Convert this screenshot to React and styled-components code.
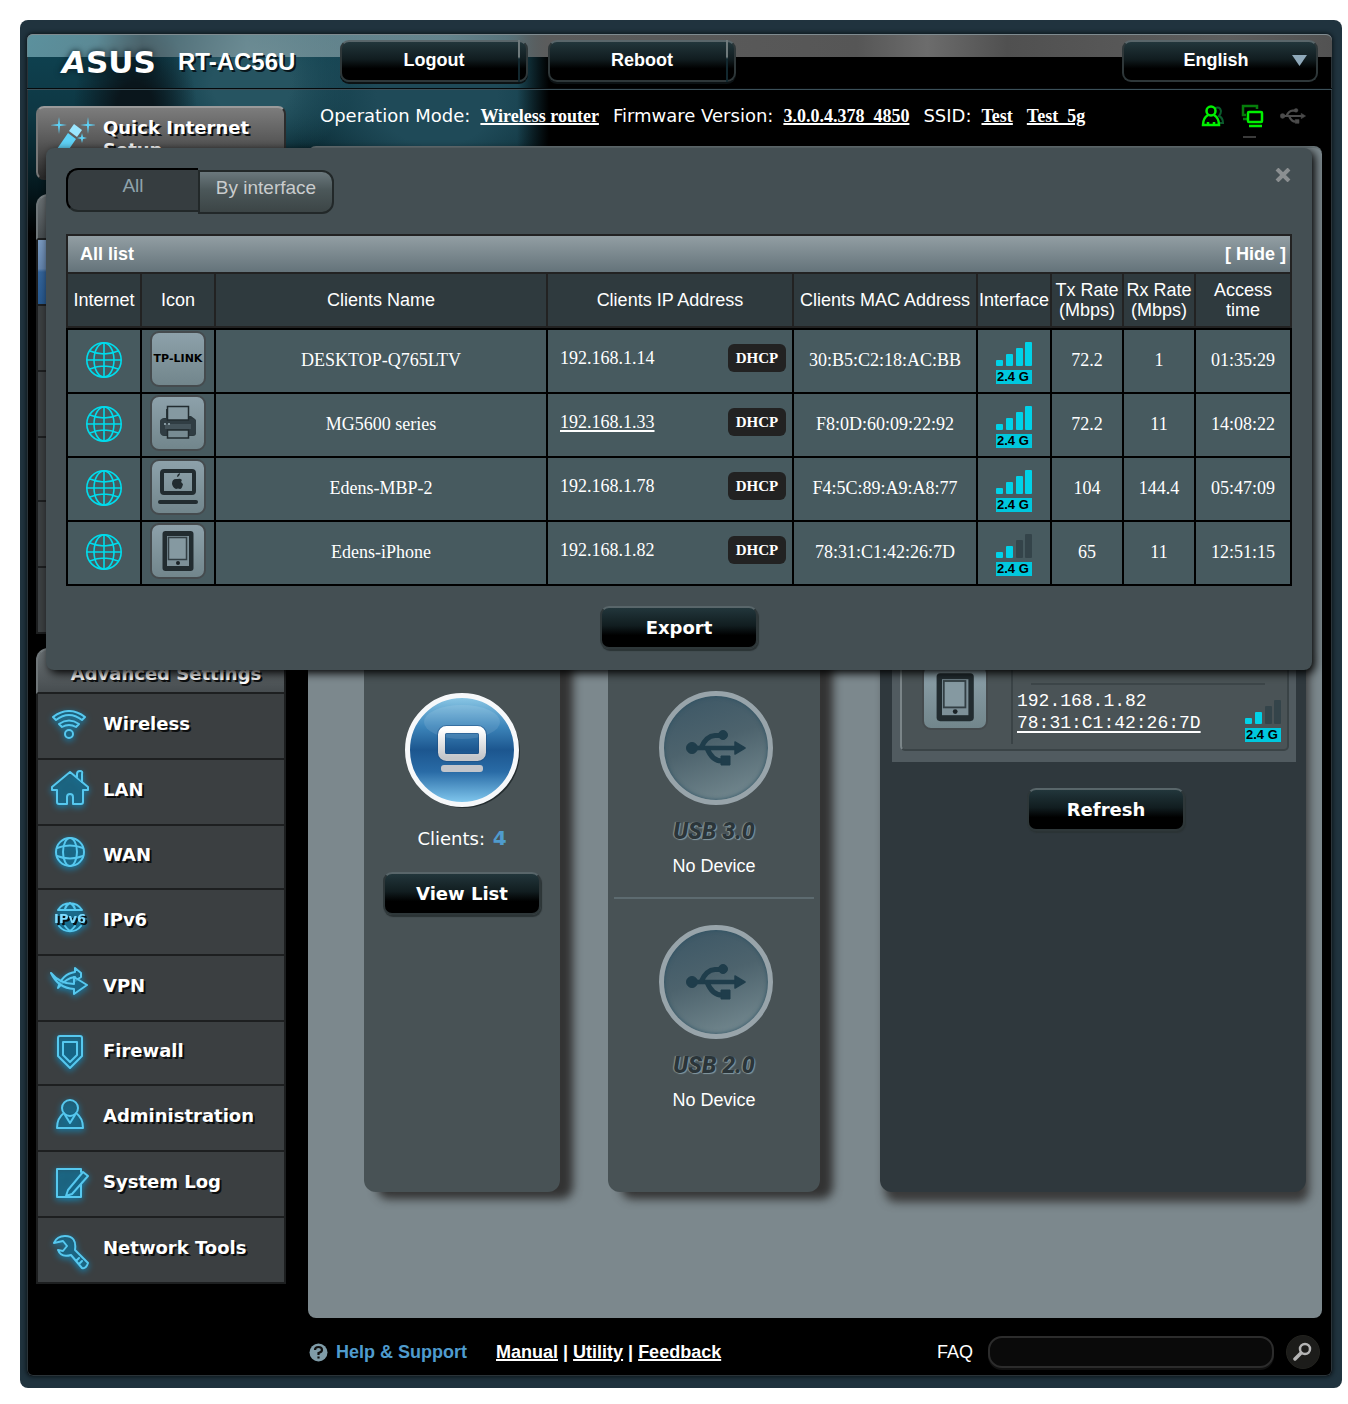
import React from "react";
import styled, { createGlobalStyle, css } from "styled-components";

const SANS = '"Liberation Sans", Arial, sans-serif';
const SERIF = '"Liberation Serif", "Times New Roman", serif';
const WIDE = '"DejaVu Sans", Verdana, sans-serif';
const MONO = '"Liberation Mono", "Courier New", monospace';

const GlobalStyle = createGlobalStyle`
  *, *::before, *::after { box-sizing: border-box; }
  body { margin: 0; background: #fff; color: #fff; font-family: ${SANS}; font-size: 18px; }
  button, input, select { font: inherit; color: inherit; margin: 0; }
  a { color: inherit; }
  svg { display: block; flex: none; }
`;

/* ---------- frame ---------- */

const Page = styled.div`
  padding: 20px 6px 16px 20px;
`;

const Frame = styled.div`
  padding: 14px 10px 12px 7px;
  border-radius: 8px;
  background: #20333e;
`;

const Screen = styled.div`
  position: relative;
  border-radius: 6px;
  background:
    radial-gradient(ellipse 62px 90px at 108px 76px, #0a161c 30%, transparent 100%),
    linear-gradient(90deg, transparent 490px, #000 522px),
    radial-gradient(ellipse 150px 130px at 410px 60px, #1f4a58 40%, transparent 100%),
    radial-gradient(ellipse 100px 80px at 225px 50px, #265461 40%, transparent 100%),
    linear-gradient(180deg, #0e4453 0, #0e3743 80px, #051a20 150px, #000 200px);
  background-color: #000;
  box-shadow: 0 0 4px 1px #0c151a, inset 0 0 0 1px #2a3338;
`;

/* ---------- header ---------- */

const Header = styled.header`
  display: flex;
  align-items: center;
  height: 56px;
  padding: 0 14px 2px 35px;
  border-radius: 6px 6px 0 0;
  border-bottom: 1px solid #3c5059;
  background:
    linear-gradient(90deg, #8fc4cf99 0, #8fb8c299 70px, #6f7f85a0 115px, #9ab0b599 220px, #9ab0b590 420px, #7f8e92a0 480px, #5c5c5c 524px, #565656 830px, #6c6c6c 900px, #505050 980px, #5e5e5e 1200px, #525252 100%) 0 0 / 100% 23px no-repeat;
  box-shadow: inset 0 1px 0 #7f8b90, inset 0 -1px 0 #05090b;
`;

const Brand = styled.div`
  display: flex;
  align-items: center;
  gap: 20px;
  width: 278px;
  padding-top: 3px;
`;

const Logo = styled.span`
  width: 96px;
  font: bold 31px/28px ${WIDE};
  text-shadow: 0 0 6px #0a1a20;
`;

const LogoSlant = styled.span`
  font-style: oblique;
`;

const Product = styled.h1`
  margin: 0;
  font: bold 24px/28px ${SANS};
  text-shadow: 2px 2px 0 #08161c;
  white-space: nowrap;
`;

const glossy = css`
  border: 2px solid #2e3739;
  border-top-color: #59666a;
  border-radius: 9px;
  background: linear-gradient(180deg, #22363b 0, #111d20 45%, #000 70%);
  color: #fff;
`;

const HeaderActions = styled.div`
  display: flex;
  gap: 20px;
  margin-right: auto;
`;

const HeaderButton = styled.button`
  ${glossy}
  position: relative;
  width: 188px;
  height: 42px;
  padding: 0;
  font-weight: bold;
  box-shadow: 0 2px 0 #0c1214;
  &::after {
    content: "";
    position: absolute;
    top: -2px;
    bottom: -2px;
    right: 6px;
    width: 2px;
    background: linear-gradient(180deg, #6f7a7c 40%, #12282f 45%);
  }
`;

const LanguageBox = styled.div`
  display: grid;
  align-items: center;
  & > * { grid-area: 1 / 1; }
  & > svg { justify-self: end; margin-right: 11px; pointer-events: none; }
`;

const Language = styled.select`
  ${glossy}
  appearance: none;
  width: 196px;
  height: 42px;
  padding: 0 8px 2px 0;
  font-weight: bold;
  text-align: center;
  text-align-last: center;
`;

/* ---------- body ---------- */

const Body = styled.div`
  display: flex;
  gap: 22px;
  padding: 0 10px 0 9px;
`;

const Sidebar = styled.nav`
  display: flex;
  flex-direction: column;
  flex: none;
  gap: 14px;
  width: 250px;
  padding-top: 16px;
`;

const menuText = css`
  font: bold 18px/22px ${WIDE};
  color: #fff;
  text-shadow: 2px 2px 0 #0c0e0f;
  text-decoration: none;
`;

const QuickSetup = styled.a`
  ${menuText}
  display: flex;
  gap: 8px;
  height: 74px;
  padding: 9px 20px 0 13px;
  border: 2px solid #2c2c2c;
  border-top-color: #9a9a9a;
  border-left-color: #777;
  border-radius: 8px;
  background: linear-gradient(180deg, #7c7c7c 0, #5a5a5a 45%, #2b2b2b 100%);
`;

const MenuTitle = styled.h2`
  ${menuText}
  height: 46px;
  margin: 0;
  padding: 13px 0 0 10px;
  border: 2px solid #1d1f20;
  border-top-color: #7b8386;
  border-left-color: #6f7679;
  border-radius: 12px 12px 0 0;
  background: linear-gradient(180deg, #6a7174 0, #474d50 100%);
  text-align: center;
`;

const Menu = styled.ul`
  margin: 0;
  padding: 0;
  list-style: none;
`;

const MenuItem = styled.li`
  height: ${(p) => (p.$short ? 64 : 66)}px;
  border: 2px solid #1d1f20;
  border-top: 0;
  background: ${(p) =>
    p.$active ? "linear-gradient(180deg, #7a9ac0 0, #6485ae 45%, #34649a 50%, #27598f 100%)" : "#3b3f41"};
`;

const MenuLink = styled.a`
  ${menuText}
  display: flex;
  align-items: center;
  gap: 13px;
  height: 100%;
  padding: 0 0 4px 12px;
`;

const Glow = styled.svg`
  fill: #17607c88;
  stroke: #56c8ef;
  stroke-width: 2;
  stroke-linejoin: round;
  stroke-linecap: round;
  filter: drop-shadow(0 2px 3px #0f8cc0);
  overflow: visible;
`;

const Content = styled.div`
  flex: 1;
  min-width: 0;
`;

const StatusBar = styled.div`
  display: flex;
  align-items: center;
  gap: 14px;
  height: 56px;
  padding: 0 16px 4px 12px;
  white-space: nowrap;
`;

const Status = styled.span`
  display: flex;
  gap: 10px;
  font: 18px/24px ${WIDE};
`;

const StatusLink = styled.a`
  margin-right: ${(p) => (p.$spaced ? 4 : 0)}px;
  font: bold 18px/24px ${SERIF};
  text-decoration-thickness: 2px;
`;

const StatusIcons = styled.div`
  display: flex;
  align-items: center;
  gap: 16px;
  margin-left: auto;
`;

const Main = styled.main`
  display: grid;
  grid-template-columns: 196px 212px minmax(300px, 1fr);
  gap: 48px;
  padding: 494px 16px 126px 56px;
  border-radius: 8px;
  border-top: 2px solid #6b777b;
  background: #7c888d;
`;

const Column = styled.section`
  display: flex;
  flex-direction: column;
  align-items: center;
  min-height: 550px;
  padding-top: 49px;
  border-radius: 12px;
  background: #485255;
  box-shadow: 13px 7px 10px #333;
`;

const SideColumn = styled(Column)`
  margin-left: 12px;
  padding: 0 10px 0 12px;
  background: #2f383d;
  box-shadow: 4px 11px 10px -1px #3a3a3a;
`;

const ClientCount = styled.p`
  margin: 16px 0 20px;
  font: 18px/26px ${WIDE};
`;

const Count = styled.strong`
  margin-left: 2px;
  color: #4f9bcd;
  font-size: 20px;
`;

const GlossButton = styled.button`
  ${glossy}
  width: 158px;
  height: 43px;
  padding: 0;
  font: bold 18px/24px ${WIDE};
  box-shadow: 1px 2px 1px #2b3335;
`;

const UsbPort = styled.div`
  display: flex;
  flex-direction: column;
  align-items: center;
  width: 200px;
  height: ${(p) => (p.$last ? 240 : 208)}px;
  margin-bottom: 26px;
  border-bottom: ${(p) => (p.$last ? "0" : "2px solid #5d6b70")};
`;

const UsbName = styled.strong`
  margin: 13px 0 8px;
  color: #2b3539;
  font: italic 900 23px/28px Roboto, "Liberation Sans", sans-serif;
  text-shadow: 1px 1px 1px #8499a1, -1px 0 1px #8499a1;
`;

const Note = styled.span`
  font: 18px/24px ${SANS};
`;

const ClientCard = styled.div`
  width: 100%;
  padding: 0 7px 11px 8px;
  background: #515b60;
`;

const ClientInner = styled.div`
  display: flex;
  align-items: flex-start;
  height: 109px;
  padding: 20px 6px 0 20px;
  border: 2px solid #3a4346;
  border-left-color: #7b8588;
  border-radius: 5px;
  background: #4a5356;
`;

const ClientText = styled.div`
  display: flex;
  flex-direction: column;
  flex: 1;
  height: 80px;
  margin-left: 23px;
  padding-left: 4px;
  border-left: 2px solid #3a4346;
  font: 18px/22px ${MONO};
  & > hr { margin: 19px -20px 5px 14px; border: 0; border-top: 2px solid #3c4548; }
  & > a { text-decoration-thickness: 2px; text-underline-offset: 3px; }
`;

const CardSignal = styled.div`
  padding-top: 30px;
`;

const RefreshWrap = styled.div`
  padding: 26px 0 0 24px;
`;

/* ---------- footer ---------- */

const Footer = styled.footer`
  display: flex;
  align-items: center;
  height: 58px;
  padding: 10px 2px 0 1px;
  font-weight: bold;
`;

const Help = styled.span`
  display: flex;
  align-items: center;
  gap: 8px;
  margin-right: 29px;
  color: #4f9bcd;
`;

const FootLinks = styled.span`
  margin-right: auto;
  & > a { text-decoration-thickness: 2px; }
`;

const Faq = styled.form`
  display: flex;
  align-items: center;
  font-weight: normal;
  & > input {
    width: 286px;
    height: 32px;
    margin: 0 12px 0 15px;
    padding: 0 14px;
    border: 2px solid #2c2c2c;
    border-radius: 14px;
    background: #0a0a0a;
    box-shadow: 0 2px 0 #111;
  }
`;

const Search = styled.button`
  display: grid;
  place-items: center;
  width: 34px;
  height: 34px;
  padding: 0;
  border: 1px solid #22221e;
  border-radius: 50%;
  background: #1c1c1a;
`;

/* ---------- client list dialog ---------- */

const Dialog = styled.section`
  position: absolute;
  top: 114px;
  left: 19px;
  right: 20px;
  padding: 20px 20px 21px;
  border-radius: 8px;
  background: #444f53;
  box-shadow: 3px 3px 10px #000;
`;

const DialogTop = styled.div`
  display: flex;
  height: 66px;
`;

const Tab = styled.button`
  width: ${(p) => (p.$selected ? 132 : 136)}px;
  height: 44px;
  margin-top: ${(p) => (p.$selected ? 0 : 2)}px;
  padding: 0 0 8px;
  border: 2px solid #222829;
  border-radius: ${(p) => (p.$selected ? "12px 0 0 12px" : "0 12px 12px 0")};
  background: ${(p) => (p.$selected ? "#363d40" : "linear-gradient(180deg, #6b787d 0, #4b5759 45%, #3c4546 100%)")};
  color: ${(p) => (p.$selected ? "#8fa3ac" : "#c9cccd")};
  font: 19px/22px ${SANS};
  ${(p) => p.$selected && "border-top-color: #000; border-left-color: #000; border-right: 0;"}
`;

const Close = styled.button`
  align-self: flex-start;
  margin-left: auto;
  padding: 0;
  border: 0;
  background: none;
`;

const ListTitle = styled.div`
  display: flex;
  justify-content: space-between;
  align-items: center;
  height: 38px;
  padding: 0 4px 0 12px;
  border: 2px solid #222;
  border-bottom: 0;
  background: linear-gradient(180deg, #929ea3 0, #64737a 100%);
  font-weight: bold;
  & > button { padding: 0; border: 0; background: none; }
`;

const Table = styled.table`
  width: 100%;
  table-layout: fixed;
  border-collapse: collapse;
`;

const Col = styled.col`
  width: ${(p) => (p.$w ? `${p.$w}px` : "auto")};
`;

const Th = styled.th`
  height: 56px;
  padding: 0 0 2px;
  border: 2px solid #222;
  border-bottom-color: #000;
  background: #2f3a3e;
  box-shadow: inset 0 -2px 0 #222;
  font: 18px/20px ${SANS};
`;

const Td = styled.td`
  height: 64px;
  padding: 0 0 2px;
  border: 2px solid #000;
  background: #475a5f;
  font: 18px/22px ${SERIF};
  text-align: center;
`;

const Center = styled.div`
  display: grid;
  justify-content: center;
`;

const IpCell = styled.div`
  display: flex;
  justify-content: space-between;
  align-items: center;
  padding: 0 6px 4px 12px;
  & > a { text-decoration-thickness: 2px; text-underline-offset: 2px; }
`;

const Badge = styled.span`
  width: 58px;
  border-radius: 6px;
  background: #222;
  font: bold 15px/28px ${SERIF};
`;

const ExportRow = styled.div`
  display: flex;
  justify-content: center;
  margin-top: 20px;
`;

const Tile = styled.div`
  display: grid;
  flex: none;
  place-items: center;
  width: ${(p) => p.$size}px;
  height: ${(p) => p.$size}px;
  margin-bottom: 2px;
  border: 2px solid #454b4e;
  border-radius: 9px;
  background: linear-gradient(180deg, #8da1aa 0, #72868c 100%);
  color: #000;
  font: bold 11px/14px ${WIDE};
  overflow: hidden;
  white-space: nowrap;
`;

const SignalBox = styled.div`
  width: 36px;
  padding-top: 6px;
`;

const Band = styled.div`
  height: 14px;
  margin-top: 4px;
  padding-left: 1px;
  background: #00c8de;
  color: #000;
  font: bold 13px/14px ${SANS};
  white-space: nowrap;
  text-align: left;
`;

/* ---------- drawings ---------- */

function Signal({ level }) {
  const bars = [6, 12, 18, 24];
  return (
    <SignalBox>
      <svg width="36" height="24" viewBox="0 0 36 24" aria-hidden="true">
        {bars.map((h, i) => (
          <rect key={h} x={i * 10 - (i === 3 ? 1 : 0)} y={24 - h} width="7" height={h} rx="1" fill={i < level ? "#00d2e8" : "#34444a"} />
        ))}
      </svg>
      <Band>2.4 G</Band>
    </SignalBox>
  );
}

function NetGlobe() {
  return (
    <svg width="38" height="38" viewBox="0 0 38 38" fill="none" stroke="#00dcec" strokeWidth="1.6" aria-hidden="true">
      <circle cx="19" cy="19" r="17.200" />
      <ellipse cx="19" cy="19" rx="10" ry="17" />
      <path d="M19 2v34M2 19h34M5 10q14 6 28 0M5 28q14-6 28 0" />
    </svg>
  );
}

function DeviceIcon({ kind, scale = 1 }) {
  const s = 42 * scale;
  if (kind === "printer")
    return (
      <svg width={s} height={s} viewBox="0 0 42 42" aria-hidden="true">
        <path d="M11 5h21v9h2l4 3q1 1 1 3v11q0 3-3 3H7q-3 0-3-3V19q0-3 3-3h2V7h2z" fill="#2b383d" />
        <path d="M3 19q0-2 3-2h30q3 0 3 2v11q0 3-3 3H6q-3 0-3-3z" fill="#303d43" />
        <path d="M8 22h26v5H8z" fill="#44535a" />
        <path d="M10.500 4.500h21V18h-21z" fill="#8599a1" stroke="#222c30" strokeWidth="1.500" />
        <path d="M10.500 28h21v8h-21z" fill="#788c93" stroke="#222c30" strokeWidth="1.500" />
        <path d="M7 21h2v2H7zM11 21h2v2h-2z" fill="#84979f" />
      </svg>
    );
  if (kind === "mac")
    return (
      <svg width={s} height={s} viewBox="0 0 42 42" aria-hidden="true">
        <rect x="5" y="5" width="32" height="22" rx="2" fill="none" stroke="#222c30" strokeWidth="4" />
        <rect x="1" y="34" width="40" height="4" rx="2" fill="#222c30" />
        <path d="M21 13q2-1 4 1-2 2 1 4-1 5-3 5-2-1-4 0-3-1-4-5 0-5 4-5zM20 11q0-3 3-4 0 3-3 4z" fill="#222c30" />
      </svg>
    );
  return (
    <svg width={s} height={s} viewBox="0 0 42 42" aria-hidden="true">
      <rect x="5.500" y="1" width="31" height="40" rx="3" fill="#222c30" />
      <rect x="10" y="6" width="22" height="30" fill="#7d9098" />
      <rect x="11.500" y="7.500" width="18" height="22" fill="#8599a1" stroke="#333f44" strokeWidth="1.500" />
      <circle cx="21" cy="33" r="2" fill="#1a2226" />
    </svg>
  );
}

function UsbTrident({ color, width, height }) {
  return (
    <svg width={width} height={height} viewBox="0 0 60 38" fill={color} stroke={color} aria-hidden="true">
      <circle cx="6" cy="19" r="5.500" />
      <path d="M6 19h44" fill="none" strokeWidth="4.500" />
      <path d="M15 19Q20 7 29 6.500h8M21 19q5 13 15 13" fill="none" strokeWidth="5" />
      <circle cx="37" cy="6" r="4.500" />
      <path d="M35 27h9v9h-9z" strokeWidth="1" strokeLinejoin="round" />
      <path d="M49 13l10 6-10 6z" strokeWidth="1.500" strokeLinejoin="round" />
    </svg>
  );
}

const Disc = styled.div`
  display: grid;
  place-items: center;
  width: 114px;
  height: 114px;
  margin-left: 4px;
  border: 5px solid #98a4aa;
  border-radius: 50%;
  background: linear-gradient(160deg, #3f5967 10%, #4d636d 45%, #71868d 90%);
  box-shadow: inset 0 0 4px #2c5163;
`;

function ClientsOrb() {
  return (
    <svg width="118" height="118" viewBox="0 0 118 118" aria-hidden="true">
      <defs>
        <linearGradient id="orb" x1="0" y1="0" x2="0" y2="1">
          <stop offset="0" stopColor="#8fcbe8" />
          <stop offset="0.280" stopColor="#3d86bb" />
          <stop offset="0.500" stopColor="#1c568f" />
          <stop offset="0.700" stopColor="#296ba6" />
          <stop offset="1" stopColor="#86cdf2" />
        </linearGradient>
        <linearGradient id="pc" x1="0" y1="0" x2="0" y2="1">
          <stop offset="0" stopColor="#fff" />
          <stop offset="1" stopColor="#c4c6ca" />
        </linearGradient>
      </defs>
      <circle cx="61" cy="61" r="56" fill="#242d30" />
      <circle cx="59" cy="59" r="54.500" fill="url(#orb)" stroke="#f6f8fa" strokeWidth="5" />
      <ellipse cx="59" cy="31" rx="38" ry="17" fill="#fff" opacity="0.100" />
      <rect x="38.500" y="38.500" width="41" height="28" rx="5" fill="none" stroke="#1b4c80" strokeWidth="9" opacity="0.500" />
      <rect x="38.500" y="38.500" width="41" height="28" rx="5" fill="none" stroke="url(#pc)" strokeWidth="7" />
      <rect x="38" y="74" width="42" height="7" rx="3" fill="#c2c5cb" />
    </svg>
  );
}

const glyphs = {
  wireless: (
    <>
      <path d="M3 13Q19 1 35 13L32 16Q19 6 6 16z" />
      <path d="M9 20q10-7 20 0l-3 3q-7-4-14 0z" />
      <circle cx="19" cy="30" r="4" />
    </>
  ),
  lan: (
    <>
      <path d="M20 2L2 17v3h5v12q0 2 2 2h8v-7q0-3 3-3t3 3v7h8q2 0 2-2V20h5v-3z" />
      <path d="M27 7V4q0-3 3-3t2 3v8" />
    </>
  ),
  wan: (
    <>
      <circle cx="20" cy="17" r="14" />
      <ellipse cx="20" cy="17" rx="7" ry="14" fill="none" />
      <path d="M7 13q13-5 26 0M7 21q13 5 26 0" fill="none" />
    </>
  ),
  ipv6: (
    <>
      <circle cx="20" cy="17" r="14" stroke="none" />
      <path d="M8 10a14 14 0 0 1 24 0zM15 9q1-4 5-6 4 2 5 6M9 26a14 14 0 0 0 22 0M15 26q2 3 5 5 3-2 5-5" fill="none" />
      <text x="20" y="23" textAnchor="middle" fontFamily="DejaVu Sans" fontWeight="bold" fontSize="13" fill="#7fdcff" stroke="none">IPv6</text>
    </>
  ),
  vpn: (
    <>
      <path d="M8 22Q12 8 25 6V2l6 5v4l-6 4v-4q-9 1-17 11z" />
      <path d="M1 7q9 11 23 11v-7l13 8-13 9v-5Q8 22 1 7z" />
    </>
  ),
  firewall: (
    <>
      <path d="M10 5h20q2 0 2 2v18L20 37 8 25V7q0-2 2-2z" />
      <path d="M13 11h14v13l-7 7-7-7z" />
    </>
  ),
  admin: (
    <>
      <path d="M14 17q-7 5-7 15h26q0-10-7-15M15 19l5 8 5-8" />
      <circle cx="20" cy="12" r="8" />
    </>
  ),
  log: (
    <>
      <path d="M31 22v13H7V7h24v3" />
      <path d="M33 10l5 4-16 18-6 2 2-6z" />
    </>
  ),
  tools: (
    <path d="M4 15l9-2 4 5-4 5-5-1q3 8 13 5l11 13q4 1 6-5L25 22q2-14-10-14-8 0-11 7zM26 33l3-3M29 36l3-3" />
  ),
};

function Wand() {
  return (
    <svg width="44" height="60" viewBox="0 0 44 60" fill="#5fd2f7" aria-hidden="true">
      <path d="M8 0l1 7 7 1-7 1-1 8-1-8-8-1 8-1zM37 0l1 7 7 1-7 1-1 8-1-8-7-1 7-1zM31 16l1 4 4 1-4 1-1 4-1-4-4-1 4-1z" />
      <path d="M23 7l8 6-5 7-8-6z" fill="#9be6ff" />
      <path d="M17 16l8 6L3 54l-8-6z" />
    </svg>
  );
}

/* ---------- data ---------- */

const advanced = [
  ["Wireless", "wireless"],
  ["LAN", "lan"],
  ["WAN", "wan", true],
  ["IPv6", "ipv6"],
  ["VPN", "vpn"],
  ["Firewall", "firewall", true],
  ["Administration", "admin"],
  ["System Log", "log"],
  ["Network Tools", "tools"],
];

const columns = [
  ["Internet", 74],
  ["Icon", 74],
  ["Clients Name"],
  ["Clients IP Address", 246],
  ["Clients MAC Address", 184],
  ["Interface", 74],
  ["Tx Rate (Mbps)", 72],
  ["Rx Rate (Mbps)", 72],
  ["Access time", 96],
];

const clients = [
  { kind: "brand", name: "DESKTOP-Q765LTV", ip: "192.168.1.14", mac: "30:B5:C2:18:AC:BB", level: 4, tx: "72.2", rx: "1", time: "01:35:29" },
  { kind: "printer", name: "MG5600 series", ip: "192.168.1.33", link: true, mac: "F8:0D:60:09:22:92", level: 4, tx: "72.2", rx: "11", time: "14:08:22" },
  { kind: "mac", name: "Edens-MBP-2", ip: "192.168.1.78", mac: "F4:5C:89:A9:A8:77", level: 4, tx: "104", rx: "144.4", time: "05:47:09" },
  { kind: "phone", name: "Edens-iPhone", ip: "192.168.1.82", mac: "78:31:C1:42:26:7D", level: 2, tx: "65", rx: "11", time: "12:51:15" },
];

/* ---------- parts ---------- */

function ClientList() {
  return (
    <Dialog role="dialog" aria-label="Client list">
      <DialogTop>
        <Tab $selected>All</Tab>
        <Tab>By interface</Tab>
        <Close aria-label="Close">
          <svg width="18" height="14" viewBox="0 0 18 14" stroke="#8b8f91" strokeWidth="4">
            <path d="M3 1l12 12M15 1L3 13" />
          </svg>
        </Close>
      </DialogTop>
      <ListTitle>
        <span>All list</span>
        <button>[ Hide ]</button>
      </ListTitle>
      <Table>
        <colgroup>
          {columns.map(([name, w]) => (
            <Col key={name} $w={w} />
          ))}
        </colgroup>
        <thead>
          <tr>
            {columns.map(([name]) => (
              <Th key={name} scope="col">{name}</Th>
            ))}
          </tr>
        </thead>
        <tbody>
          {clients.map((c) => (
            <tr key={c.mac}>
              <Td><Center><NetGlobe /></Center></Td>
              <Td>
                <Center>
                  <Tile $size={56}>{c.kind === "brand" ? "TP-LINK" : <DeviceIcon kind={c.kind} />}</Tile>
                </Center>
              </Td>
              <Td>{c.name}</Td>
              <Td>
                <IpCell>
                  {c.link ? <a href="#printer">{c.ip}</a> : <span>{c.ip}</span>}
                  <Badge>DHCP</Badge>
                </IpCell>
              </Td>
              <Td>{c.mac}</Td>
              <Td><Center><Signal level={c.level} /></Center></Td>
              <Td>{c.tx}</Td>
              <Td>{c.rx}</Td>
              <Td>{c.time}</Td>
            </tr>
          ))}
        </tbody>
      </Table>
      <ExportRow>
        <GlossButton>Export</GlossButton>
      </ExportRow>
    </Dialog>
  );
}

function Navigation() {
  return (
    <Sidebar>
      <QuickSetup href="#setup">
        <Wand />
        <span>Quick Internet Setup</span>
      </QuickSetup>
      <div aria-hidden="true">
        <MenuTitle as="div" />
        <Menu as="div">
          <MenuItem as="div" $active />
          <MenuItem as="div" />
          <MenuItem as="div" />
          <MenuItem as="div" $short />
          <MenuItem as="div" />
          <MenuItem as="div" />
        </Menu>
      </div>
      <div>
        <MenuTitle>Advanced Settings</MenuTitle>
        <Menu>
          {advanced.map(([label, icon, short]) => (
            <MenuItem key={label} $short={short}>
              <MenuLink href={`#${icon}`}>
                <Glow width="40" height="40" viewBox="0 0 40 40" aria-hidden="true">{glyphs[icon]}</Glow>
                {label}
              </MenuLink>
            </MenuItem>
          ))}
        </Menu>
      </div>
    </Sidebar>
  );
}

function TopStatus() {
  return (
    <StatusBar>
      <Status>Operation Mode: <StatusLink href="#mode">Wireless router</StatusLink></Status>
      <Status>Firmware Version: <StatusLink href="#firmware">3.0.0.4.378_4850</StatusLink></Status>
      <Status>
        SSID: <StatusLink href="#ssid" $spaced>Test</StatusLink>
        <StatusLink href="#ssid5">Test_5g</StatusLink>
      </Status>
      <StatusIcons>
        <svg width="24" height="24" viewBox="0 0 24 24" fill="none" strokeWidth="2" aria-hidden="true">
          <path d="M15 4q5-2 6 3 0 3-2 5 4 2 4 7h-4" stroke="#0b5a2c" />
          <circle cx="11" cy="7" r="4.500" stroke="#00f000" strokeWidth="2.500" />
          <path d="M8 11q-5 3-5 10h16q0-7-5-10M8 20v-2M14 20v-2" stroke="#00f000" strokeWidth="2.500" />
        </svg>
        <svg width="24" height="44" viewBox="0 -8 24 44" fill="none" strokeWidth="2.500" aria-hidden="true">
          <path d="M17 7V4H3v9h3M3 17h4" stroke="#067d0b" />
          <rect x="8" y="10" width="14" height="10" rx="1" stroke="#00f000" />
          <path d="M9 24h13" stroke="#00f000" />
          <path d="M3 35h13" stroke="#777" strokeWidth="1" />
        </svg>
        <UsbTrident color="#4c4c4c" width={26} height={18} />
      </StatusIcons>
    </StatusBar>
  );
}

function Usb({ name, last }) {
  return (
    <UsbPort $last={last}>
      <Disc><UsbTrident color="#1f3d4b" width={60} height={38} /></Disc>
      <UsbName>{name}</UsbName>
      <Note>No Device</Note>
    </UsbPort>
  );
}

export default function App() {
  return (
    <Page>
      <GlobalStyle />
      <Frame>
        <Screen>
          <Header>
            <Brand>
              <Logo><LogoSlant>A</LogoSlant>SUS</Logo>
              <Product>RT-AC56U</Product>
            </Brand>
            <HeaderActions>
              <HeaderButton>Logout</HeaderButton>
              <HeaderButton>Reboot</HeaderButton>
            </HeaderActions>
            <LanguageBox>
              <Language aria-label="Language" defaultValue="English">
                <option>English</option>
              </Language>
              <svg width="15" height="11" viewBox="0 0 15 11" fill="#8fa9ba" aria-hidden="true">
                <path d="M0 0h15L7.500 11z" />
              </svg>
            </LanguageBox>
          </Header>
          <Body>
            <Navigation />
            <Content>
              <TopStatus />
              <Main>
                <Column>
                  <ClientsOrb />
                  <ClientCount>Clients: <Count>4</Count></ClientCount>
                  <GlossButton>View List</GlossButton>
                </Column>
                <Column>
                  <Usb name="USB 3.0" />
                  <Usb name="USB 2.0" last />
                </Column>
                <SideColumn>
                  <ClientCard>
                    <ClientInner>
                      <Tile $size={66}><DeviceIcon kind="phone" scale={1.2} /></Tile>
                      <ClientText>
                        <hr />
                        <span>192.168.1.82</span>
                        <a href="#client">78:31:C1:42:26:7D</a>
                      </ClientText>
                      <CardSignal><Signal level={2} /></CardSignal>
                    </ClientInner>
                  </ClientCard>
                  <RefreshWrap><GlossButton>Refresh</GlossButton></RefreshWrap>
                </SideColumn>
              </Main>
              <Footer>
                <Help>
                  <svg width="19" height="19" viewBox="0 0 19 19" aria-hidden="true">
                    <circle cx="9.500" cy="9.500" r="9" fill="#7f9ca8" />
                    <path d="M6 7q0-3 3.500-3T13 7q0 2-3.500 3v2M9.500 13.500v2" fill="none" stroke="#111" strokeWidth="2.200" />
                  </svg>
                  Help &amp; Support
                </Help>
                <FootLinks>
                  <a href="#manual">Manual</a> | <a href="#utility">Utility</a> | <a href="#feedback">Feedback</a>
                </FootLinks>
                <Faq>
                  <label htmlFor="faq">FAQ</label>
                  <input id="faq" type="text" />
                  <Search type="button" aria-label="Search">
                    <svg width="20" height="20" viewBox="0 0 20 20" fill="none" stroke="#b4b4b4" strokeWidth="2.500" strokeLinecap="round" aria-hidden="true">
                      <circle cx="12" cy="7" r="5" />
                      <path d="M8 11l-6 6" strokeWidth="3.500" />
                    </svg>
                  </Search>
                </Faq>
              </Footer>
            </Content>
          </Body>
          <ClientList />
        </Screen>
      </Frame>
    </Page>
  );
}
